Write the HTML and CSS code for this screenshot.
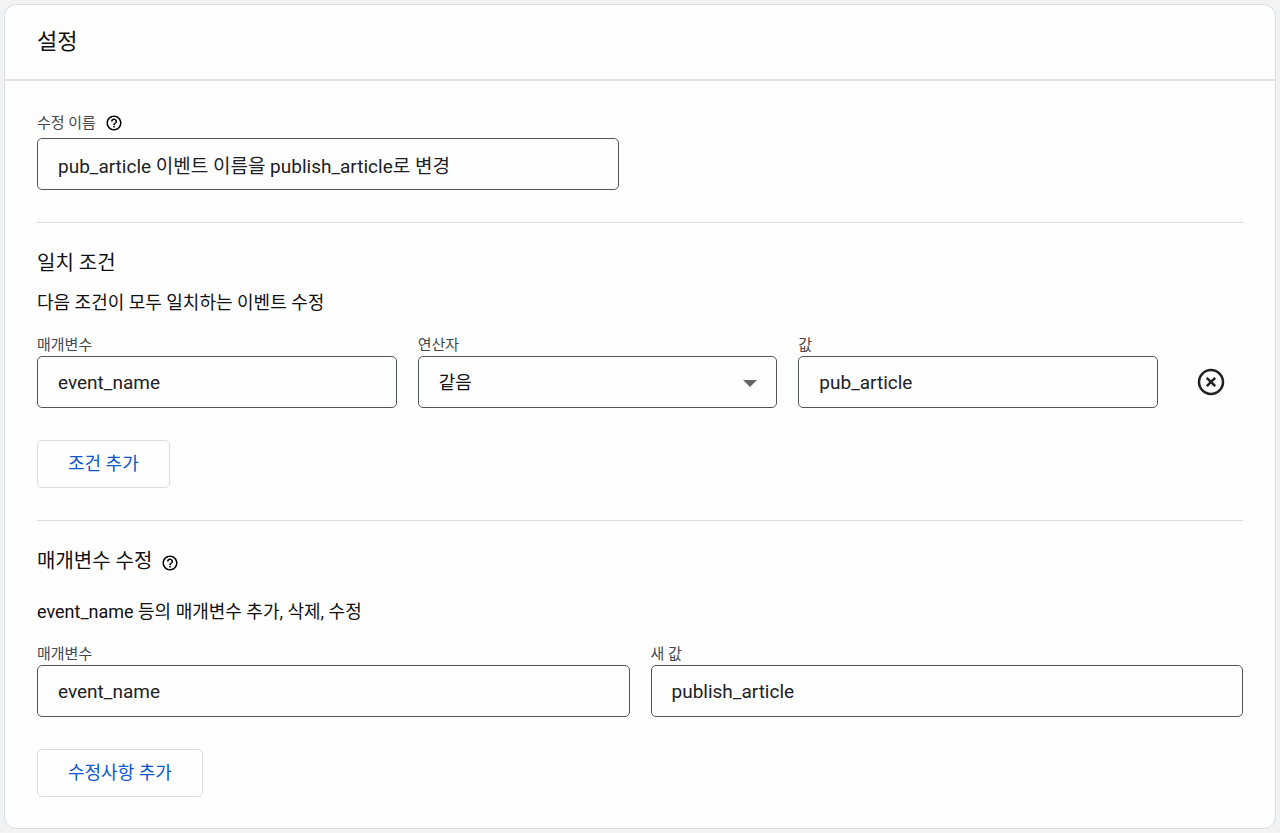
FILE: index.html
```html
<!DOCTYPE html>
<html lang="ko">
<head>
  <meta charset="UTF-8">
  <meta name="viewport" content="width=device-width, initial-scale=1.0">
  <title>설정</title>
  <link rel="stylesheet" href="styles.css">
</head>
<body>
  <main class="card">
    <header class="card-header">
      <h1>설정</h1>
    </header>

    <form class="card-body">
      <div class="field name-field">
        <div class="label-row">
          <label for="name">수정 이름</label>
          <button type="button" class="help" aria-label="도움말">
            <svg viewBox="0 0 24 24" width="18" height="18"><path d="M11 18h2v-2h-2v2zm1-16C6.48 2 2 6.48 2 12s4.48 10 10 10 10-4.48 10-10S17.52 2 12 2zm0 18c-4.41 0-8-3.59-8-8s3.59-8 8-8 8 3.59 8 8-3.59 8-8 8zm0-14c-2.21 0-4 1.79-4 4h2c0-1.1.9-2 2-2s2 .9 2 2c0 2-3 1.75-3 5h2c0-2.25 3-2.5 3-5 0-2.21-1.79-4-4-4z"/></svg>
          </button>
        </div>
        <input type="text" id="name" value="pub_article 이벤트 이름을 publish_article로 변경">
      </div>

      <section class="section">
        <h2>일치 조건</h2>
        <p>다음 조건이 모두 일치하는 이벤트 수정</p>
        <div class="conditions">
          <div class="field">
            <label for="param">매개변수</label>
            <input type="text" id="param" value="event_name">
          </div>
          <div class="field">
            <label for="operator">연산자</label>
            <div class="select">
              <select id="operator">
                <option>같음</option>
              </select>
              <svg class="arrow" viewBox="0 0 14 7" width="14" height="7"><path d="M0 0h14L7 7z"/></svg>
            </div>
          </div>
          <div class="field">
            <label for="value">값</label>
            <input type="text" id="value" value="pub_article">
          </div>
          <button type="button" class="remove" aria-label="조건 삭제">
            <svg viewBox="0 0 28 28" width="28" height="28"><circle cx="14" cy="14" r="12"/><path d="M9.8 9.8l8.4 8.4M18.2 9.8l-8.4 8.4"/></svg>
          </button>
        </div>
        <button type="button" class="add">조건 추가</button>
      </section>

      <section class="section">
        <div class="title-row">
          <h2>매개변수 수정</h2>
          <button type="button" class="help" aria-label="도움말">
            <svg viewBox="0 0 24 24" width="18" height="18"><path d="M11 18h2v-2h-2v2zm1-16C6.48 2 2 6.48 2 12s4.48 10 10 10 10-4.48 10-10S17.52 2 12 2zm0 18c-4.41 0-8-3.59-8-8s3.59-8 8-8 8 3.59 8 8-3.59 8-8 8zm0-14c-2.21 0-4 1.79-4 4h2c0-1.1.9-2 2-2s2 .9 2 2c0 2-3 1.75-3 5h2c0-2.25 3-2.5 3-5 0-2.21-1.79-4-4-4z"/></svg>
          </button>
        </div>
        <p>event_name 등의 매개변수 추가, 삭제, 수정</p>
        <div class="changes">
          <div class="field">
            <label for="edit-param">매개변수</label>
            <input type="text" id="edit-param" value="event_name">
          </div>
          <div class="field">
            <label for="new-value">새 값</label>
            <input type="text" id="new-value" value="publish_article">
          </div>
        </div>
        <button type="button" class="add">수정사항 추가</button>
      </section>
    </form>
  </main>
</body>
</html>
```
FILE: styles.css
```css
* {
  box-sizing: border-box;
}
body {
  margin: 0;
  padding: 4px;
  background: #f1f3f4;
  color: #111;
  font-family: Roboto, "Noto Sans CJK KR", sans-serif;
  font-size: 18px;
  line-height: 24px;
}
h1, h2, p {
  margin: 0;
  font-weight: 400;
}
button, input, select {
  font: inherit;
}

/* Card */
.card {
  background: #fefefe;
  border: 1px solid #dadce0;
  border-radius: 12px;
}
.card-header {
  padding: 21px 32px;
  border-bottom: 2px solid #e1e3e6;
}
h1 {
  font-size: 22px;
  line-height: 32px;
}
h2 {
  font-size: 20px;
  line-height: 32px;
}
.card-body {
  padding: 32px 32px 31px;
}
.section {
  margin-top: 32px;
  padding-top: 24px;
  border-top: 1px solid #dadce0;
}
.section p {
  margin: 12px 0 20px;
}
.section .title-row + p {
  margin-top: 23px;
}

/* Fields */
.field {
  display: flex;
  flex-direction: column;
  gap: 1px;
  min-width: 0;
}
.name-field {
  width: calc(50% - 21px);
  gap: 5px;
}
label {
  color: #44484c;
  font-size: 15px;
  line-height: 20px;
}
.label-row, .title-row {
  display: flex;
  align-items: center;
  gap: 9px;
}
.title-row .help {
  margin-top: 4px;
}
input, select {
  width: 100%;
  height: 52px;
  padding: 0 20px;
  border: 1px solid #50565c;
  border-radius: 5px;
  background: transparent;
  color: #202124;
}
input {
  font-size: 19px;
}
.select {
  position: relative;
}
select {
  appearance: none;
  padding-top: 2px;
  color: #111;
}
.arrow {
  position: absolute;
  top: 24px;
  right: 20px;
  fill: #666;
  pointer-events: none;
}
.conditions {
  display: grid;
  grid-template-columns: repeat(3, 1fr) 64px;
  gap: 21px;
  align-items: end;
}
.changes {
  display: grid;
  grid-template-columns: 1fr 1fr;
  gap: 21px;
}

/* Buttons */
.help, .remove {
  display: flex;
  align-items: center;
  justify-content: center;
  padding: 0;
  border: none;
  background: none;
  cursor: pointer;
}
.remove {
  height: 52px;
}
.remove svg {
  fill: none;
  stroke: #202124;
  stroke-width: 2.5;
}
.add {
  display: block;
  height: 48px;
  margin-top: 32px;
  padding: 0 30px;
  border: 1px solid #dadce0;
  border-radius: 5px;
  background: transparent;
  color: #0b57d0;
  cursor: pointer;
}
```
